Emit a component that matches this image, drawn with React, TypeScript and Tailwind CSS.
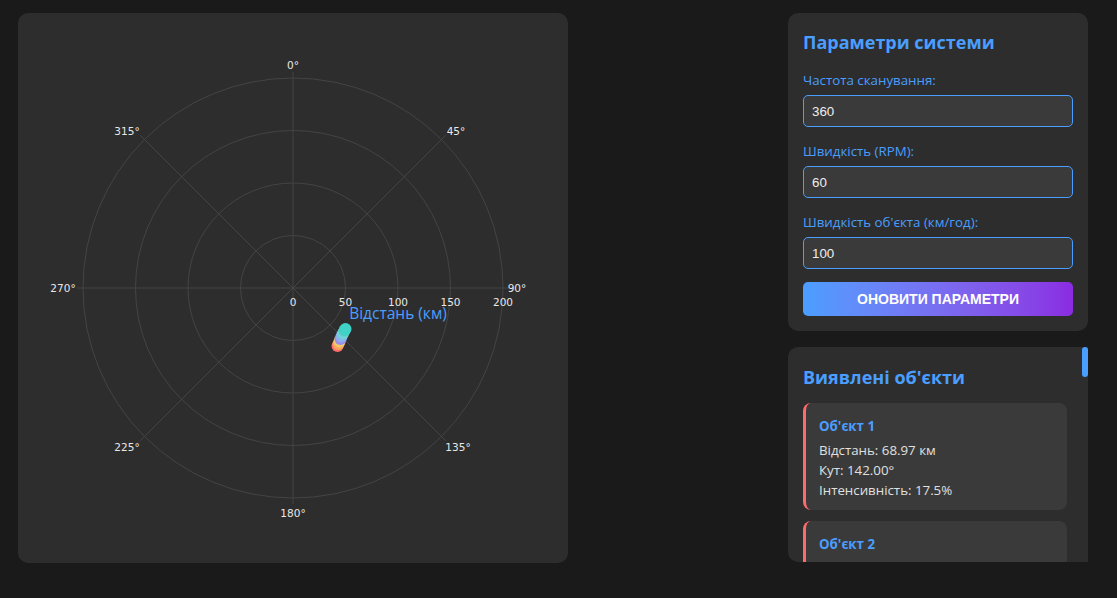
import React from "react";

const CX = 275;
const CY = 275;
const R = 210;

const ANGLE_LABELS = [
  { t: "0°", x: 275, y: 52 },
  { t: "45°", x: 438, y: 118 },
  { t: "90°", x: 499, y: 275 },
  { t: "135°", x: 440, y: 434 },
  { t: "180°", x: 275, y: 500 },
  { t: "225°", x: 109, y: 434 },
  { t: "270°", x: 45, y: 275 },
  { t: "315°", x: 109, y: 118 },
];

// trail of the detected object, oldest first
const TRAIL = [
  { x: 319.5, y: 333, c: "#ff6b6b" },
  { x: 320.5, y: 331, c: "#f7a65a" },
  { x: 321.5, y: 328.5, c: "#f3c76a" },
  { x: 322.5, y: 326, c: "#9b8fe8" },
  { x: 323.5, y: 323.5, c: "#8ab0ee" },
  { x: 325, y: 320.5, c: "#6fd3d6" },
  { x: 326.5, y: 317.5, c: "#4ecdc4" },
  { x: 327.5, y: 316, c: "#40d2c6" },
];

const OBJECTS = [
  { d: "68.97", a: "142.00", i: "17.5" },
  { d: "71.42", a: "143.50", i: "16.9" },
];

function PolarChart() {
  const spokes = [0, 45, 90, 135, 180, 225, 270, 315];
  return (
    <svg width="550" height="550" viewBox="0 0 550 550">
      {[52.5, 105, 157.5, 210].map((r) => (
        <circle key={r} cx={CX} cy={CY} r={r} fill="none" stroke="#444444" strokeWidth="1" />
      ))}
      {spokes.map((deg) => {
        const rad = (deg * Math.PI) / 180;
        return (
          <line
            key={deg}
            x1={CX}
            y1={CY}
            x2={CX + (R + 6) * Math.sin(rad)}
            y2={CY - (R + 6) * Math.cos(rad)}
            stroke="#444444"
            strokeWidth="1"
          />
        );
      })}
      {ANGLE_LABELS.map((l) => (
        <text
          key={l.t}
          x={l.x}
          y={l.y}
          textAnchor="middle"
          dominantBaseline="central"
          fill="#e8e8e8"
          fontSize="10.5"
          fontFamily="'DejaVu Sans', Verdana, sans-serif"
        >
          {l.t}
        </text>
      ))}
      {[0, 50, 100, 150, 200].map((v, i) => (
        <text
          key={v}
          x={CX + i * 52.5}
          y={289}
          textAnchor="middle"
          dominantBaseline="central"
          fill="#e8e8e8"
          fontSize="10.5"
          fontFamily="'DejaVu Sans', Verdana, sans-serif"
        >
          {v}
        </text>
      ))}
      <text
        x={380}
        y={300}
        textAnchor="middle"
        dominantBaseline="central"
        fill="#4a9eff"
        fontSize="15.5"
        fontFamily="'Open Sans', sans-serif"
      >
        Відстань (км)
      </text>
      {TRAIL.map((p, i) => (
        <circle key={i} cx={p.x} cy={p.y} r="6" fill={p.c} />
      ))}
    </svg>
  );
}

function Field({ label, value }: { label: string; value: string }) {
  return (
    <div className="mb-[14px]">
      <label className="block h-5 leading-5 text-[13.3px] text-[#4a9eff] mb-[5px]">{label}</label>
      <input
        defaultValue={value}
        className="block w-full h-8 px-2 rounded-[5px] border border-[#4a9eff] bg-[#3a3a3a] text-[#eeeeee] text-[13.333px] outline-none"
        style={{ fontFamily: "'Liberation Sans', Arial, sans-serif" }}
      />
    </div>
  );
}

export default function App() {
  return (
    <div
      className="min-h-screen bg-[#1a1a1a] flex justify-between pl-[18px] pr-[29px] pt-[13px]"
      style={{ fontFamily: "'Open Sans', 'Noto Sans', sans-serif" }}
    >
      {/* Radar */}
      <div className="w-[550px] h-[550px] rounded-[10px] bg-[#2d2d2d]">
        <PolarChart />
      </div>

      {/* Sidebar */}
      <div className="w-[300px] h-[549px] flex flex-col gap-4">
        <div className="rounded-[10px] bg-[#2d2d2d] p-[15px]">
          <h3 className="h-[29px] leading-[29px] text-[18px] font-bold text-[#4a9eff] mb-[13px]">Параметри системи</h3>
          <Field label="Частота сканування:" value="360" />
          <Field label="Швидкість (RPM):" value="60" />
          <Field label="Швидкість об'єкта (км/год):" value="100" />
          <button
            className="-mt-[1px] w-full h-[34px] rounded-[5px] bg-gradient-to-r from-[#4a9eff] to-[#8a2be2] text-white text-[14px] font-bold uppercase"
            style={{ fontFamily: "'Liberation Sans', Arial, sans-serif" }}
          >
            Оновити параметри
          </button>
        </div>

        <div className="relative flex-1 min-h-0 overflow-hidden rounded-l-[10px] bg-[#2d2d2d]">
          <div className="p-[15px] pr-[21px]">
            <h3 className="h-[30px] leading-[30px] text-[18px] font-bold text-[#4a9eff] mb-[11px]">Виявлені об'єкти</h3>
            <div className="flex flex-col gap-[11px]">
              {OBJECTS.map((o, i) => (
                <div
                  key={i}
                  className="rounded-[8px] bg-[#3a3a3a] border-l-[3px] border-[#ff6b6b] pl-[13px] pr-3 pt-3 pb-[10px] text-[13.3px] text-[#e0e0e0]"
                >
                  <div className="h-[22px] leading-[22px] font-bold text-[#4a9eff] mb-[3px]">Об'єкт {i + 1}</div>
                  <div className="leading-5">Відстань: {o.d} км</div>
                  <div className="leading-5">Кут: {o.a}°</div>
                  <div className="leading-5">Інтенсивність: {o.i}%</div>
                </div>
              ))}
            </div>
          </div>
          {/* scrollbar thumb */}
          <div className="absolute top-0 right-0 w-[6px] h-[30px] rounded-[3px] bg-[#4a9eff]" />
        </div>
      </div>
    </div>
  );
}
